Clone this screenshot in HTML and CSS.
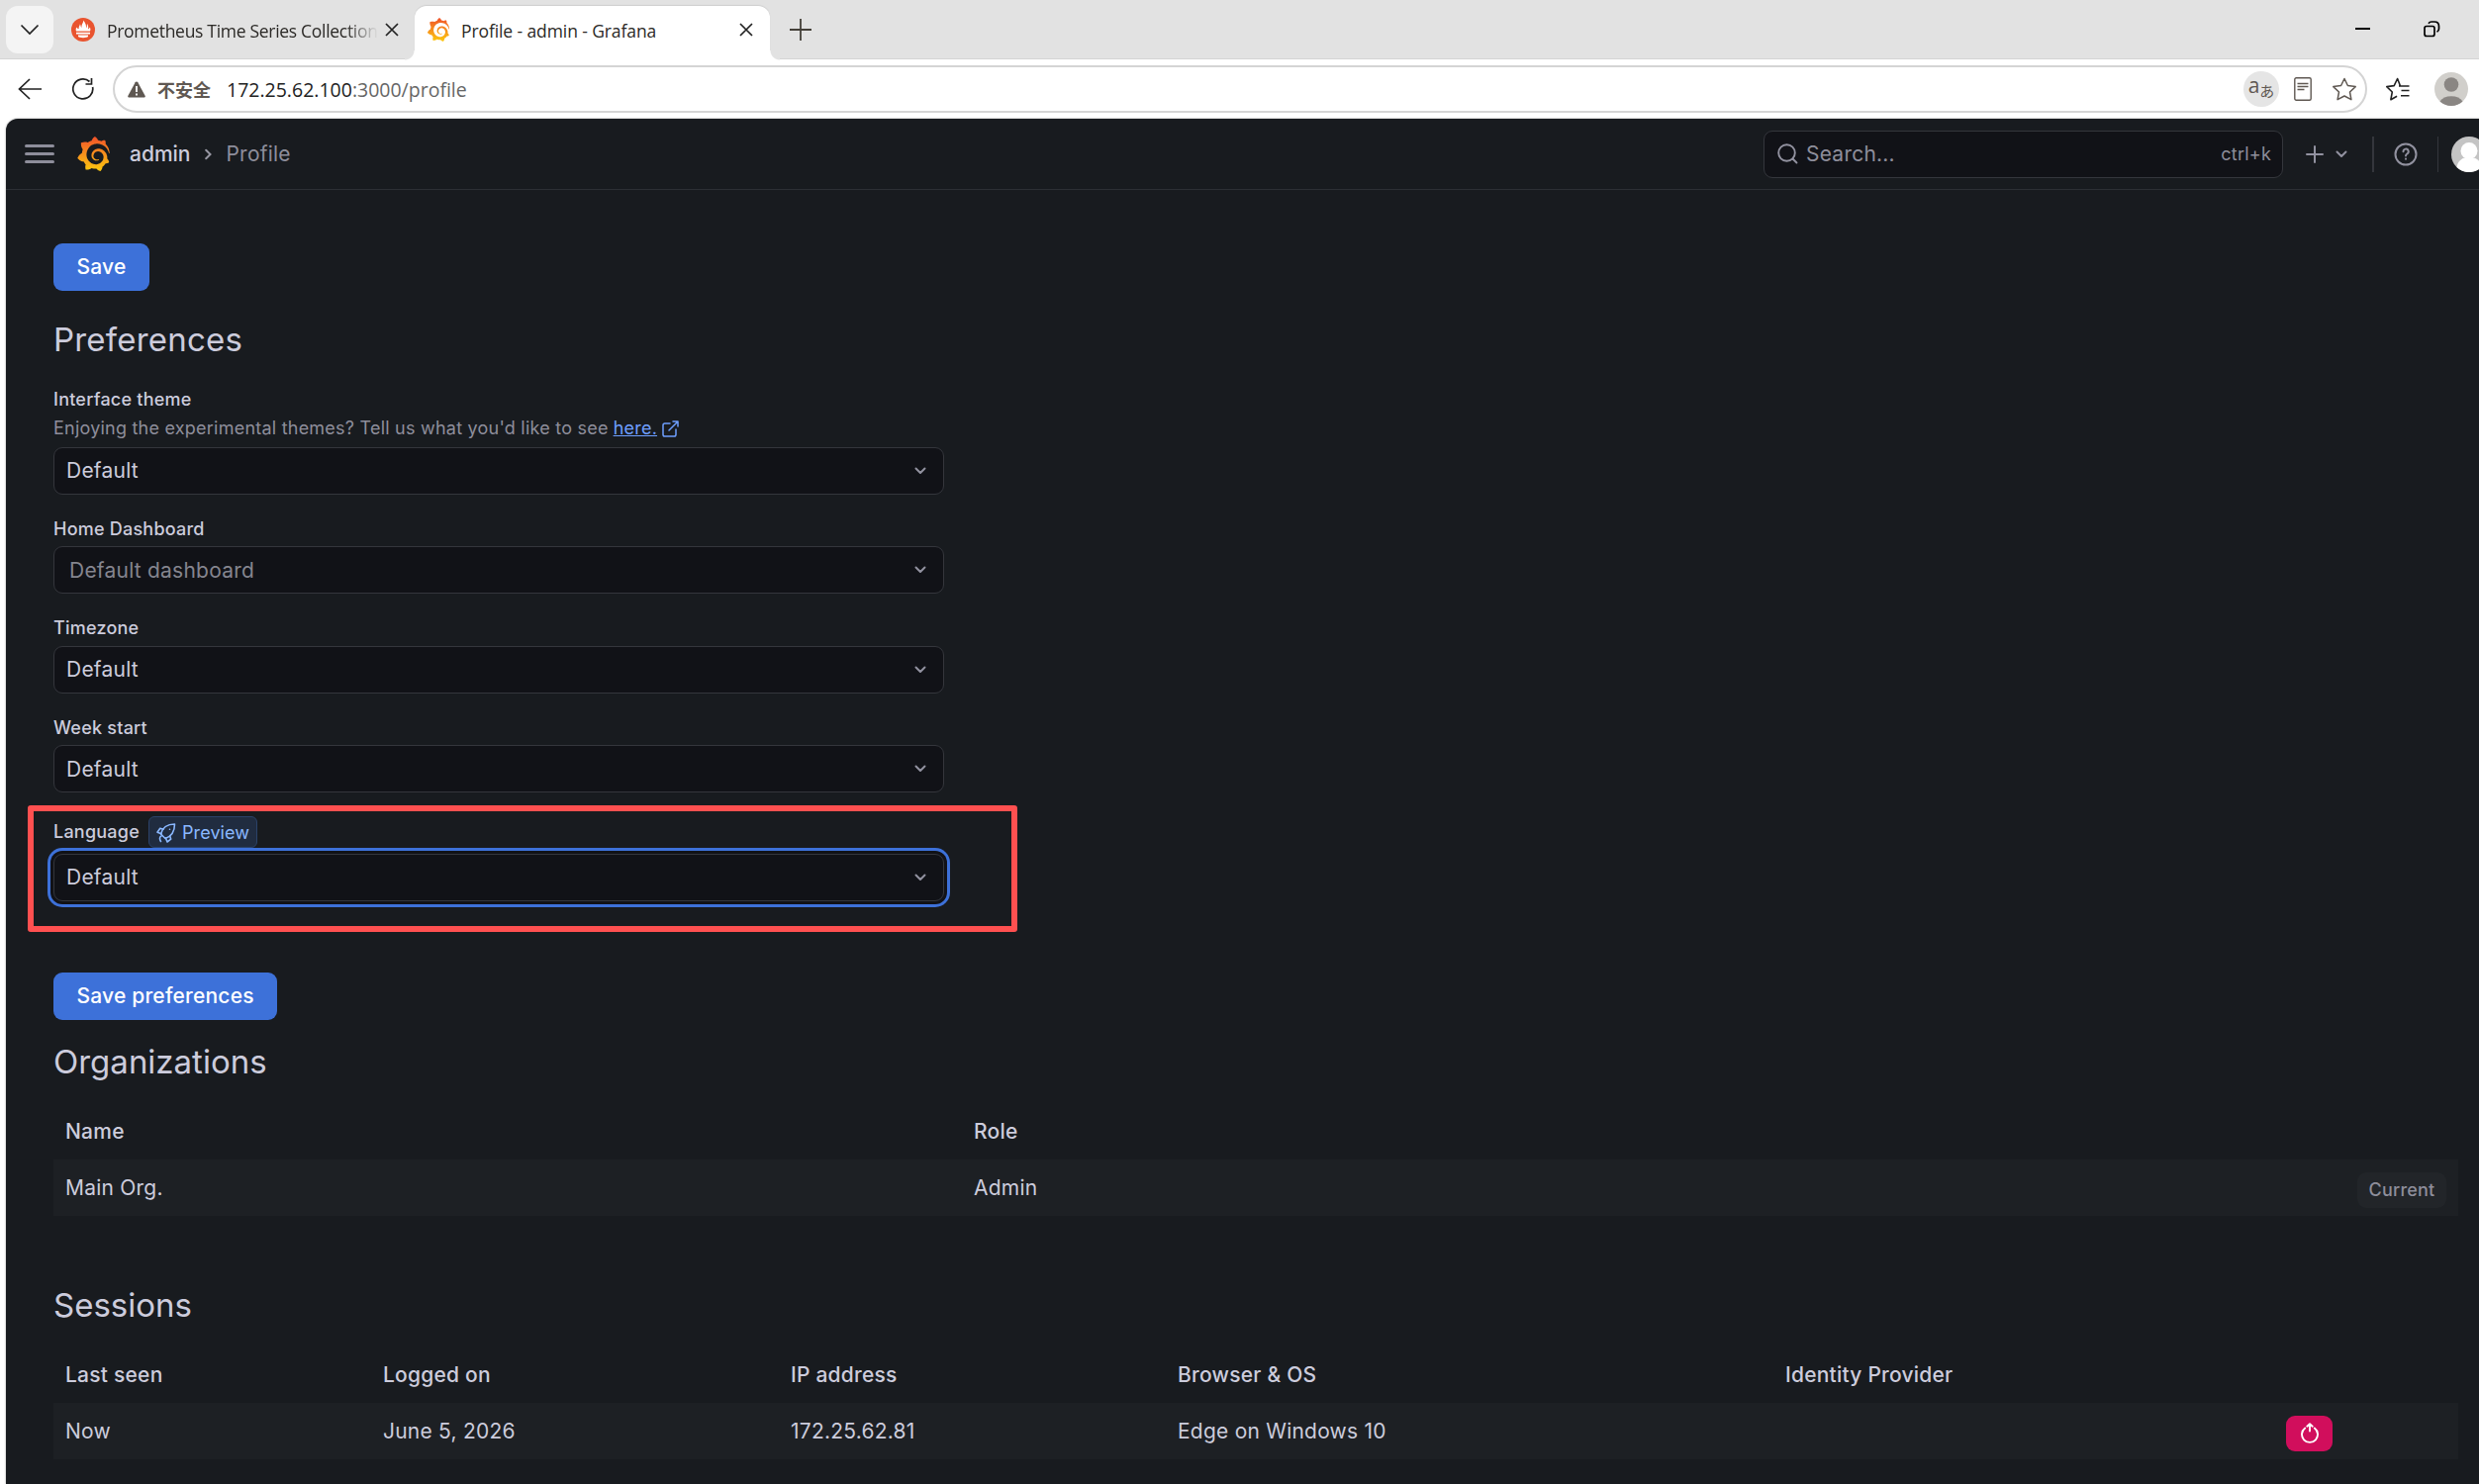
FILE: index.html
```
<!DOCTYPE html>
<html lang="en">

<head>
    <meta charset="utf-8">
    <title>Profile - admin - Grafana</title>
    <link rel="stylesheet" href="styles.css">
</head>

<body>
    <svg class="sprite" width="0" height="0">
        <defs>
            <linearGradient id="flame" x1="0" y1="1" x2="0" y2="0">
                <stop offset="0" stop-color="#fcc90f"/>
                <stop offset="0.55" stop-color="#f78a1e"/>
                <stop offset="1" stop-color="#f0502a"/>
            </linearGradient>
        </defs>
        <symbol id="grafana" viewBox="0 0 24 24">
            <path d="M23.02 10.59a8.578 8.578 0 0 0-.862-3.034 8.911 8.911 0 0 0-1.789-2.445c.337-1.342-.413-2.505-.413-2.505-1.292-.08-2.113.4-2.416.62-.052-.02-.102-.044-.154-.064-.22-.089-.446-.172-.677-.247-.231-.073-.47-.14-.711-.197a9.867 9.867 0 0 0-.875-.161C14.557.753 12.94 0 12.94 0c-1.804 1.145-2.147 2.744-2.147 2.744l-.018.093c-.098.029-.2.057-.298.088-.138.042-.275.094-.413.143-.138.055-.275.107-.41.166a8.869 8.869 0 0 0-1.557.87l-.063-.029c-2.497-.955-4.716.195-4.716.195-.203 2.658.996 4.33 1.235 4.636a11.608 11.608 0 0 0-.607 2.635C1.636 12.677.953 15.014.953 15.014c1.926 2.214 4.171 2.351 4.171 2.351.003-.002.006-.002.006-.005.285.509.615.994.986 1.446.156.19.32.371.488.548-.704 2.009.099 3.68.099 3.68 2.144.08 3.553-.937 3.849-1.173a9.784 9.784 0 0 0 3.164.501h.08l.055-.003.107-.002.103-.005.003.002c1.01 1.44 2.788 1.646 2.788 1.646 1.264-1.332 1.337-2.653 1.337-2.94v-.058c0-.02-.003-.039-.003-.06.265-.187.52-.387.758-.6a7.875 7.875 0 0 0 1.415-1.7c1.43.083 2.437-.885 2.437-.885-.236-1.49-1.085-2.216-1.264-2.354l-.018-.013-.016-.013a.217.217 0 0 1-.031-.02c.008-.092.016-.18.02-.27.011-.162.016-.323.016-.48v-.253l-.005-.098-.008-.135a1.891 1.891 0 0 0-.01-.13c-.003-.042-.008-.083-.013-.125l-.016-.124-.018-.122a6.215 6.215 0 0 0-2.032-3.73 6.015 6.015 0 0 0-3.222-1.46 6.292 6.292 0 0 0-.85-.048l-.107.002h-.063l-.044.003-.104.008a4.777 4.777 0 0 0-3.335 1.695c-.332.4-.592.84-.768 1.297a4.594 4.594 0 0 0-.312 1.817l.003.091c.005.055.007.11.013.164a3.615 3.615 0 0 0 .698 1.82 3.53 3.53 0 0 0 1.827 1.282c.33.098.66.14.971.137.039 0 .078 0 .114-.002l.063-.003c.02 0 .041-.003.062-.003.034-.002.065-.007.099-.01.007 0 .018-.003.028-.003l.031-.005.06-.008a1.18 1.18 0 0 0 .112-.02c.036-.008.072-.013.109-.024a2.634 2.634 0 0 0 .914-.415c.028-.02.056-.041.085-.065a.248.248 0 0 0 .039-.35.244.244 0 0 0-.309-.06l-.078.042c-.09.044-.184.083-.283.116a2.476 2.476 0 0 1-.475.096c-.028.003-.054.006-.083.006l-.083.002c-.026 0-.054 0-.08-.002l-.102-.006h-.012l-.024.006c-.016-.003-.031-.003-.044-.006-.031-.002-.06-.007-.091-.01a2.59 2.59 0 0 1-.724-.213 2.557 2.557 0 0 1-.667-.438 2.52 2.52 0 0 1-.805-1.475 2.306 2.306 0 0 1-.029-.444l.006-.122v-.023l.002-.031c.003-.021.003-.04.005-.06a3.163 3.163 0 0 1 1.352-2.29 3.12 3.12 0 0 1 .937-.43 2.946 2.946 0 0 1 .776-.101h.06l.07.002.045.003h.026l.07.005a4.041 4.041 0 0 1 1.635.49 3.94 3.94 0 0 1 1.602 1.662 3.77 3.77 0 0 1 .397 1.414l.005.076.003.075c.002.026.002.05.002.075 0 .024.003.052 0 .07v.065l-.002.073-.008.174a6.195 6.195 0 0 1-.08.639 5.1 5.1 0 0 1-.267.927 5.31 5.31 0 0 1-.624 1.13 5.052 5.052 0 0 1-3.237 2.014 4.82 4.82 0 0 1-.649.066l-.039.003h-.287a6.607 6.607 0 0 1-1.716-.265 6.776 6.776 0 0 1-3.4-2.274 6.75 6.75 0 0 1-.746-1.15 6.616 6.616 0 0 1-.714-2.596l-.005-.083-.002-.02v-.056l-.003-.073v-.096l-.003-.104v-.07l.003-.163c.008-.22.026-.45.054-.678a8.707 8.707 0 0 1 .28-1.355c.128-.444.286-.872.473-1.277a7.04 7.04 0 0 1 1.456-2.1 5.925 5.925 0 0 1 .953-.763c.169-.111.343-.213.524-.306.089-.05.182-.091.273-.135.047-.02.093-.042.138-.062a7.177 7.177 0 0 1 .714-.267l.145-.045c.049-.015.098-.026.148-.041.098-.029.197-.052.296-.076.049-.013.1-.02.15-.033l.15-.032.151-.028.076-.013.075-.01.153-.024c.057-.01.114-.013.171-.023l.169-.021c.036-.003.073-.008.106-.01l.073-.008.036-.003.042-.002c.057-.003.114-.008.171-.01l.086-.006h.023l.037-.003.145-.007a7.999 7.999 0 0 1 1.708.125 7.917 7.917 0 0 1 2.048.68 8.253 8.253 0 0 1 1.672 1.09l.09.077.089.078c.06.052.114.107.171.16.057.052.112.106.166.16.052.055.107.107.159.164a8.671 8.671 0 0 1 1.41 1.978c.012.026.028.052.04.078l.04.078.075.156c.023.051.05.1.07.153l.065.15a8.848 8.848 0 0 1 .45 1.34.19.19 0 0 0 .201.142.186.186 0 0 0 .172-.184c.01-.246.002-.532-.024-.856z" fill="url(#flame)"/>
        </symbol>
        <symbol id="close" viewBox="0 0 14 14">
            <path d="M1 1l12 12M13 1L1 13" fill="none" stroke="#222" stroke-width="1.7"/>
        </symbol>
        <symbol id="angle-down" viewBox="0 0 12 8">
            <path d="M1.5 1.5L6 6l4.500-4.500" fill="none" stroke="currentColor" stroke-width="2" stroke-linecap="round" stroke-linejoin="round"/>
        </symbol>
    </svg>

    <!-- browser tabs -->
    <div class="tabbar">
        <div class="tab-menu">
            <svg width="20" height="12" viewBox="0 0 20 12"><path d="M1.500 1.500L10 10l8.500-8.500" fill="none" stroke="#222" stroke-width="1.700"/></svg>
        </div>
        <div class="tab">
            <svg class="favicon" width="24" height="24" viewBox="0 0 24 24">
                <circle cx="12" cy="12" r="12" fill="#e9542f"/>
                <path d="M5 13.500h14c.6-1.200.6-2.500-.3-4-.3 1.200-1 1.700-1.700 1.800.8-2.200-.2-3.400-.8-5.300-.8 1.500.2 3-.9 4.300C15 7.500 14.500 5 12.200 2.500 12.400 5 10.400 6 10.400 10c-1-.7-.7-2.500-1.500-3.700C8.800 8.200 7.200 9 7.700 11.300 6.800 11.200 6 10.600 5.500 9.600 4.500 11 4.500 12.400 5 13.500zM5 14.700h14v1.800H5zM7 17.600h10v1.500c-1.500 1.500-8.500 1.500-10 0z" fill="#fff"/>
            </svg>
            <span class="tab-title faded">Prometheus Time Series Collection</span>
            <svg class="tab-close" width="14" height="14"><use href="#close"/></svg>
        </div>
        <div class="tab active">
            <svg class="favicon" width="24" height="24"><use href="#grafana"/></svg>
            <span class="tab-title">Profile - admin - Grafana</span>
            <svg class="tab-close" width="14" height="14"><use href="#close"/></svg>
        </div>
        <svg class="new-tab" width="22" height="22" viewBox="0 0 22 22"><path d="M11 0v22M0 11h22" stroke="#444039" stroke-width="1.800"/></svg>
        <div class="window-buttons">
            <svg width="15" height="16" viewBox="0 0 15 16"><path d="M0 7h15" stroke="#000" stroke-width="2"/></svg>
            <svg width="17" height="17" viewBox="0 0 17 17" fill="none" stroke="#000" stroke-width="1.700"><rect x="1" y="5.500" width="10" height="10" rx="2"/><path d="M5 2.800C5.800 1.500 6.800 1 8 1h3c3 0 4.500 2 4.500 4.500V8c0 1.500-.7 2.700-2 3.300"/></svg>
        </div>
    </div>

    <!-- address bar -->
    <div class="toolbar">
        <svg class="back" width="24" height="22" viewBox="0 0 24 22"><path d="M12 1L1.500 11 12 21M1.500 11H24" fill="none" stroke="#222" stroke-width="1.700"/></svg>
        <svg class="reload" width="22" height="22" viewBox="0 0 22 22"><path d="M20.600 9A10 10 0 1 1 17.500 3.500M19.500 0v6h-6" fill="none" stroke="#222" stroke-width="1.700"/></svg>
        <div class="address">
            <svg class="warn" width="18" height="17" viewBox="0 0 18 17"><path d="M9 0.500c.6 0 1 .3 1.300.8l7.300 13.400c.5 1-.1 1.800-1.200 1.800H1.600c-1.100 0-1.700-.8-1.200-1.800L7.700 1.300C8 .8 8.400.5 9 .5z" fill="#5f5852"/><path d="M9 5v6M9 12.500v2" stroke="#fff" stroke-width="1.800"/></svg>
            <span class="insecure">不安全</span>
            <span class="url">172.25.62.100<span class="path">:3000/profile</span></span>
            <span class="translate"><span class="latin">a</span><span class="kana">あ</span></span>
            <svg class="reader" width="18" height="24" viewBox="0 0 18 24" fill="none" stroke="#5f5852" stroke-width="1.400"><rect x=".8" y=".8" width="16.400" height="22.400" rx="1.500"/><path d="M3.500 6.500h11M3.500 9.500h11M3.500 12.500h7"/></svg>
            <svg class="star" width="26" height="24" viewBox="0 0 26 24"><path d="M13 1.500l3.400 7 7.800 1.100-5.700 5.400 1.400 7.700L13 19l-6.900 3.700L7.500 15 1.800 9.600l7.800-1.100z" fill="none" stroke="#5f5852" stroke-width="1.500" stroke-linejoin="round"/></svg>
        </div>
        <svg class="favorites" width="26" height="24" viewBox="0 0 26 24"><path d="M15.500 9L12.600 1.500 9.200 8.600 1.800 9.600l5.500 5.400-1.400 7.700 6.200-3.500M14 9h10.500M16.500 13.500h8M16 18.700h8.500" fill="none" stroke="#222" stroke-width="1.600" stroke-linejoin="round"/></svg>
        <svg class="account" width="34" height="34" viewBox="0 0 34 34"><circle cx="17" cy="17" r="17" fill="#d1cfcb"/><circle cx="17" cy="12.500" r="7.300" fill="#8a8683"/><path d="M5.500 29.500a13 10 0 0 1 23 0A17 17 0 0 1 5.500 29.500z" fill="#8a8683"/></svg>
    </div>

    <div class="app">
        <header class="topnav">
            <div class="menu"><i></i><i></i><i></i></div>
            <svg class="logo" width="35" height="35"><use href="#grafana"/></svg>
            <span class="crumb">admin</span>
            <svg class="crumb-sep" width="7" height="12" viewBox="0 0 7 12"><path d="M1.200 1.700L5.500 6l-4.300 4.300" fill="none" stroke="#9797a3" stroke-width="2" stroke-linecap="round"/></svg>
            <span class="crumb current">Profile</span>
            <div class="search">
                <svg width="21" height="21" viewBox="0 0 21 21"><circle cx="9.500" cy="9.500" r="8.300" fill="none" stroke="#9292a0" stroke-width="1.900"/><path d="M15.500 15.500l4 4" stroke="#9292a0" stroke-width="1.900" stroke-linecap="round"/></svg>
                <span class="placeholder">Search...</span>
                <span class="shortcut">ctrl+k</span>
            </div>
            <svg class="plus" width="18" height="18" viewBox="0 0 18 18"><path d="M9 1v16M1 9h16" stroke="#9292a0" stroke-width="2" stroke-linecap="round"/></svg>
            <svg class="plus-arrow" width="12" height="8"><use href="#angle-down"/></svg>
            <span class="divider"></span>
            <svg class="help" width="24" height="24" viewBox="0 0 24 24" fill="none" stroke="#9292a0" stroke-width="2" stroke-linecap="round"><circle cx="12" cy="12" r="10.500"/><path d="M9.500 9.200a2.600 2.600 0 1 1 3.800 2.300c-.9.500-1.300.8-1.300 1.900"/><path d="M12 16.600v.1"/></svg>
            <span class="divider"></span>
            <svg class="avatar" width="36" height="36" viewBox="0 0 36 36"><circle cx="18" cy="18" r="18" fill="#c4c4c4"/><circle cx="18" cy="14.500" r="8.500" fill="#fff"/><path d="M5.500 31c1-6 5-9 8.500-9.500h8c4 .5 8 4 8.500 9.500a18 18 0 0 1-25 0z" fill="#fff"/></svg>
        </header>

        <main class="content">
            <button class="btn">Save</button>

            <h3 class="preferences-title">Preferences</h3>
            <div class="field first">
                <label>Interface theme</label>
                <p class="description">Enjoying the experimental themes? Tell us what you'd like to see <a>here.</a>
                    <svg width="17" height="17" viewBox="0 0 17 17" fill="none" stroke="#6e9fff" stroke-width="1.500" stroke-linecap="round" stroke-linejoin="round"><path d="M8 3H2.800C1.800 3 1 3.800 1 4.800v9.400c0 1 .8 1.800 1.800 1.800h9.400c1 0 1.800-.8 1.800-1.800V9M11 1h5v5M16 1L7 10"/></svg>
                </p>
                <div class="select"><span>Default</span><svg width="12" height="8"><use href="#angle-down"/></svg></div>
            </div>
            <div class="field">
                <label>Home Dashboard</label>
                <div class="select empty"><span>Default dashboard</span><svg width="12" height="8"><use href="#angle-down"/></svg></div>
            </div>
            <div class="field">
                <label>Timezone</label>
                <div class="select"><span>Default</span><svg width="12" height="8"><use href="#angle-down"/></svg></div>
            </div>
            <div class="field">
                <label>Week start</label>
                <div class="select"><span>Default</span><svg width="12" height="8"><use href="#angle-down"/></svg></div>
            </div>
            <div class="field language">
                <div class="label-row">
                    <label>Language</label>
                    <span class="preview">
                        <svg width="20" height="20" viewBox="0 0 20 20" fill="none" stroke="#8ab8ff" stroke-width="1.600" stroke-linecap="round" stroke-linejoin="round"><path d="M4.500 11C6 5 10.500 1 18.500 1 18.500 9 15 13.500 9 15.500z"/><path d="M7 6.300L3.800 5.300 1 9.200l4 1.500M13.700 13l1 3.200-3.700 2.800-1.600-4M5 13c-2 .8-1.800 3.500-.5 5.500"/><path d="M13.500 6.200v.1"/></svg>
                        Preview
                    </span>
                </div>
                <div class="select focused"><span>Default</span><svg width="12" height="8"><use href="#angle-down"/></svg></div>
                <div class="highlight"></div>
            </div>
            <button class="btn save-preferences">Save preferences</button>

            <h3 class="table-title">Organizations</h3>
            <div class="table orgs">
                <div class="row head"><span>Name</span><span>Role</span><span></span></div>
                <div class="row"><span>Main Org.</span><span>Admin</span><span class="action"><button class="btn-current">Current</button></span></div>
            </div>

            <h3 class="table-title sessions-title">Sessions</h3>
            <div class="table sessions">
                <div class="row head"><span>Last seen</span><span>Logged on</span><span>IP address</span><span>Browser &amp; OS</span><span>Identity Provider</span><span></span></div>
                <div class="row"><span>Now</span><span>June 5, 2026</span><span>172.25.62.81</span><span>Edge on Windows 10</span><span></span><span class="action"><button class="btn-revoke"><svg width="18" height="21" viewBox="0 0 18 21" fill="none" stroke="#fff" stroke-width="1.900" stroke-linecap="round" stroke-linejoin="round"><path d="M4.200 5.500a8 8 0 1 0 9.600 0M9 8.500V1.500M6.300 3.700L9 1.200l2.700 2.500"/></svg></button></span></div>
            </div>
        </main>
    </div>
</body>

</html>
```
FILE: styles.css
```
* {
    box-sizing: border-box;
}

body {
    margin: 0;
    width: 2505px;
    height: 1500px;
    overflow: hidden;
    background: #fff;
    font-family: "Open Sans", "Noto Sans CJK SC", sans-serif;
}

svg {
    display: block;
    flex: none;
}

.sprite {
    position: absolute;
}

button {
    border: 0;
    font-family: inherit;
}

/* browser */
.tabbar {
    display: flex;
    align-items: center;
    height: 60px;
    padding-left: 6px;
    background: #e2e2e2;
    border-bottom: 1px solid #d4d4d4;
}

.tab-menu {
    display: flex;
    align-items: center;
    justify-content: center;
    width: 48px;
    height: 48px;
    margin-top: 1px;
    border-radius: 12px;
    background: #f4f4f4;
}

.tab {
    display: flex;
    align-items: center;
    width: 365px;
    height: 54px;
    margin-top: 6px;
    padding: 0 16px 6px 18px;
}

.tab.active {
    position: relative;
    width: 359px;
    height: 55px;
    padding: 0 17px 7px 12px;
    margin-bottom: -1px;
    border-radius: 12px 12px 0 0;
    background: #fff;
    box-shadow: 0 -1px 1px #cfcfcf;
}

/* curved feet of the selected tab */
.tab.active::before,
.tab.active::after {
    content: "";
    position: absolute;
    bottom: 0;
    width: 10px;
    height: 10px;
}

.tab.active::before {
    left: -10px;
    background: radial-gradient(circle at 0 0, #e2e2e2 9px, #fff 10px);
}

.tab.active::after {
    right: -10px;
    background: radial-gradient(circle at 100% 0, #e2e2e2 9px, #fff 10px);
}

.tab-title {
    flex: 1;
    margin-left: 12px;
    padding-top: 2px;
    font-size: 17.5px;
    line-height: 24px;
    letter-spacing: -0.1px;
    color: #2b2926;
    white-space: nowrap;
    overflow: hidden;
}

.tab.active .tab-title {
    margin-left: 11px;
}

.tab-title.faded {
    margin-right: 7px;
    letter-spacing: -0.3px;
    -webkit-mask-image: linear-gradient(to right, #000 88%, transparent);
    mask-image: linear-gradient(to right, #000 88%, transparent);
}

.new-tab {
    margin-left: 20px;
}

.window-buttons {
    display: flex;
    align-items: center;
    gap: 54px;
    margin-left: auto;
    padding-right: 39px;
}

.toolbar {
    display: flex;
    align-items: center;
    height: 60px;
    padding: 0 11px 0 18px;
}

.reload {
    margin-left: 31px;
}

.address {
    display: flex;
    align-items: center;
    width: 2278px;
    height: 48px;
    margin-left: 19px;
    padding: 0 8px 0 13px;
    border: 2px solid #d4d4d4;
    border-radius: 24px;
}

.insecure {
    margin-left: 12px;
    font-size: 18px;
    font-weight: 700;
    line-height: 24px;
    color: #5f5852;
    font-family: "Noto Sans CJK SC", sans-serif;
}

.url {
    margin-left: 16px;
    font-size: 19.5px;
    color: #222;
}

.url .path {
    color: #666;
}

.translate {
    display: flex;
    justify-content: center;
    width: 36px;
    height: 36px;
    margin-left: auto;
    border-radius: 50%;
    background: #e5e5e5;
    color: #5f5852;
}

.translate .latin {
    font-size: 21px;
    line-height: 29px;
}

.translate .kana {
    font-size: 15px;
    line-height: 41px;
}

.reader {
    margin-left: 15px;
}

.star {
    margin-left: 20px;
}

.favorites {
    margin-left: 18px;
}

.account {
    margin-left: auto;
}

/* grafana */
.app {
    width: 2500px;
    height: 1380px;
    margin-left: 6px;
    border-top-left-radius: 12px;
    background: #181b1f;
    box-shadow: 0 0 2px #888;
    color: #ccccdc;
    font-family: Inter, sans-serif;
    font-size: 21px;
    letter-spacing: 0.225px;
}

.topnav {
    display: flex;
    align-items: center;
    height: 72px;
    padding-left: 19px;
    border-bottom: 1px solid #2c2f34;
}

.menu {
    display: flex;
    flex-direction: column;
    gap: 5px;
    width: 30px;
}

.menu i {
    height: 3px;
    border-radius: 2px;
    background: #8e8e9b;
}

.logo {
    margin-left: 22px;
}

.crumb {
    margin-left: 19px;
    font-weight: 500;
    letter-spacing: 0;
}

.crumb-sep {
    margin-left: 15px;
}

.crumb.current {
    margin-left: 14px;
    font-weight: 400;
    letter-spacing: 0.225px;
    color: #8e8e9b;
}

.search {
    display: flex;
    align-items: center;
    width: 525px;
    height: 48px;
    margin-left: auto;
    padding: 0 11px 0 13px;
    border: 1px solid #34363c;
    border-radius: 9px;
    background: #111217;
    color: #8e8e9b;
}

.placeholder {
    margin-left: 8px;
}

.shortcut {
    margin-left: auto;
    font-size: 18px;
}

.plus {
    margin-left: 23px;
}

.plus-arrow {
    margin-left: 12px;
    color: #9292a0;
}

.divider {
    width: 2px;
    height: 36px;
    margin-left: 25px;
    background: #34363c;
}

.help {
    margin-left: 20px;
}

.help + .divider {
    width: 1px;
    margin-left: 20px;
}

.avatar {
    margin-left: 13px;
    margin-right: -7px;
}

.content {
    padding: 54px 22px 0 48px;
}

.btn {
    display: block;
    height: 48px;
    padding: 0 23.5px 1px;
    border-radius: 9px;
    background: #3d71d9;
    color: #fff;
    font-size: 21px;
    font-weight: 500;
    letter-spacing: 0.2px;
}

h3 {
    margin: 0;
    font-size: 33px;
    font-weight: 400;
    line-height: 40px;
    letter-spacing: 0;
}

.preferences-title {
    margin-top: 29px;
    letter-spacing: 0.2px;
}

.field {
    position: relative;
    width: 900px;
    margin-top: 24px;
}

.field.first {
    margin-top: 30px;
}

.field label {
    display: block;
    margin-bottom: 6.4px;
    font-size: 18px;
    font-weight: 500;
    line-height: 22px;
}

.description {
    display: flex;
    margin: 0 0 8.6px;
    font-size: 18px;
    line-height: 23px;
    height: 22px;
    color: #8e8e9b;
}

.description a {
    margin-left: 5px;
    color: #6e9fff;
    text-decoration: underline;
}

.description svg {
    margin: 4px 0 0 5px;
}

.select {
    display: flex;
    align-items: center;
    justify-content: space-between;
    height: 48px;
    padding: 0 17px 0 12px;
    border: 1px solid #34363c;
    border-radius: 9px;
    background: #111217;
}

.select svg {
    color: #9292a0;
}

.select.empty {
    padding-left: 15px;
    color: #85858f;
}

.select.focused {
    box-shadow: 0 0 0 3px #111217, 0 0 0 6px #3d71d9;
}

.label-row {
    display: flex;
    align-items: center;
    height: 32px;
    margin-bottom: 5.8px;
}

.label-row label {
    margin-bottom: 0;
}

.preview {
    display: flex;
    align-items: center;
    gap: 6px;
    height: 32px;
    margin-left: 9px;
    padding: 1px 7px 0;
    border: 1px solid #2b4269;
    border-radius: 6px;
    background: #202c40;
    color: #8ab8ff;
    font-size: 18px;
    letter-spacing: 0.1px;
}

.highlight {
    position: absolute;
    left: -26px;
    top: -11px;
    width: 1000px;
    height: 128px;
    border: 6px solid #ff5050;
    border-radius: 3px;
}

.save-preferences {
    margin-top: 72px;
}

.table-title {
    margin-top: 22px;
}

.table {
    margin-top: 22px;
}

.row {
    display: grid;
    height: 57px;
    line-height: 57px;
    background: #1d2024;
}

.row.head {
    background: none;
    font-weight: 500;
}

.row span {
    padding: 0 12px;
}

.orgs .row {
    grid-template-columns: 918px 1fr 114px;
}

.sessions .row {
    grid-template-columns: 321px 412px 391px 614px 506px 1fr;
}

.sessions-title {
    margin-top: 70px;
}

.row .action {
    padding-top: 13px;
}

.btn-current {
    display: block;
    width: 90px;
    height: 36px;
    padding: 0;
    border-radius: 9px;
    background: #222529;
    color: #8e8e9b;
    font-size: 18px;
    font-weight: 500;
    letter-spacing: 0.225px;
}

.btn-revoke {
    display: flex;
    align-items: center;
    justify-content: center;
    width: 47px;
    height: 36px;
    padding: 0;
    border-radius: 9px;
    background: #d10e5c;
}
```
